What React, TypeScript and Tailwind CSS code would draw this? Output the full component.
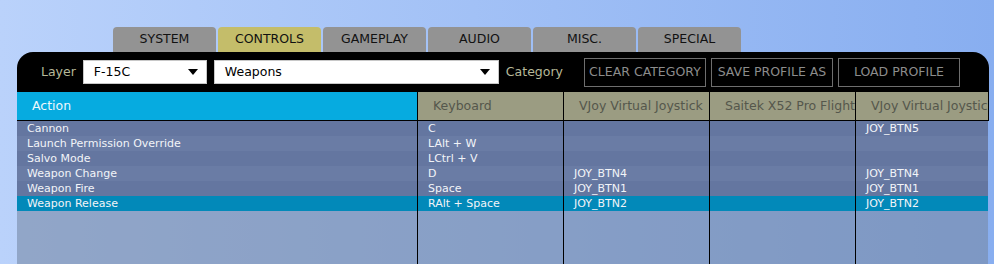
import { Fragment } from "react";

const tabs = ["SYSTEM", "CONTROLS", "GAMEPLAY", "AUDIO", "MISC.", "SPECIAL"];

const columns = [
  { label: "Action", w: "w-[401px]" },
  { label: "Keyboard", w: "w-[146px]" },
  { label: "VJoy Virtual Joystick", w: "w-[146px]" },
  { label: "Saitek X52 Pro Flight", w: "w-[146px]" },
  { label: "VJoy Virtual Joystick", w: "w-[132px]" },
];

const rows = [
  ["Cannon", "C", "", "", "JOY_BTN5"],
  ["Launch Permission Override", "LAlt + W", "", "", ""],
  ["Salvo Mode", "LCtrl + V", "", "", ""],
  ["Weapon Change", "D", "JOY_BTN4", "", "JOY_BTN4"],
  ["Weapon Fire", "Space", "JOY_BTN1", "", "JOY_BTN1"],
  ["Weapon Release", "RAlt + Space", "JOY_BTN2", "", "JOY_BTN2"],
];

function Select({ value, w }: { value: string; w: string }) {
  return (
    <div className={`${w} h-[24px] bg-white border border-[#c8c8c8] flex items-center justify-between pl-[10px] pr-[8px] text-black`}>
      <span className="pt-[1px]">{value}</span>
      <svg width="10" height="6" viewBox="0 0 10 6">
        <polygon points="0,0 10,0 5,6" fill="#000" />
      </svg>
    </div>
  );
}

function ToolButton({ label }: { label: string }) {
  return (
    <div className="w-[122px] h-[29px] border border-[#6e6e6e] flex items-center justify-center text-[#8c8c8c] whitespace-nowrap overflow-hidden">
      {label}
    </div>
  );
}

export default function App() {
  return (
    <div className="w-[994px] h-[264px] overflow-hidden flex flex-col bg-gradient-to-r from-[#bad2fb] to-[#88aef0] font-['DejaVu_Sans',sans-serif] text-[12.5px]">
      <div className="flex gap-[2px] pl-[113px] pt-[27px]">
        {tabs.map((t) => (
          <div
            key={t}
            className={`w-[103px] h-[25px] rounded-t-[4px] flex items-center justify-center text-[#111] ${
              t === "CONTROLS" ? "bg-[#c4bd6a]" : "bg-[#939393]"
            }`}
          >
            {t}
          </div>
        ))}
      </div>

      <div className="ml-[17px] w-[972px] flex-1 flex flex-col">
        <div className="h-[40px] flex items-center pl-[24px] shrink-0 bg-black rounded-t-[16px]">
          <span className="text-[#b6b898] mr-[7px]">Layer</span>
          <Select value="F-15C" w="w-[124px]" />
          <div className="w-[7px]" />
          <Select value="Weapons" w="w-[285px]" />
          <span className="text-[#b6b898] ml-[7px] mr-[21px]">Category</span>
          <div className="flex gap-[5px]">
            <ToolButton label="CLEAR CATEGORY" />
            <ToolButton label="SAVE PROFILE AS" />
            <ToolButton label="LOAD PROFILE" />
          </div>
        </div>

        <div className="flex h-[29px] border-b border-r border-black shrink-0">
          {columns.map((c, i) => (
            <div
              key={i}
              className={`${c.w} pl-[15px] flex items-center whitespace-nowrap overflow-hidden ${
                i < columns.length - 1 ? "border-r border-black" : ""
              } ${i === 0 ? "bg-[#06abe0] text-[#eef8fc]" : "bg-[#9b9c82] text-[#55574c]"}`}
            >
              {c.label}
            </div>
          ))}
        </div>

        <div className="flex-1 flex flex-col text-[11px] text-[#f2f4f8] w-[971px]">
          {rows.map((r, ri) => (
            <div
              key={ri}
              className={`flex h-[15px] leading-[15px] ${
                ri === rows.length - 1 ? "bg-[#0289b9]" : ri % 2 === 0 ? "bg-[#6476a0]" : "bg-[#6a7ca5]"
              }`}
            >
              {r.map((cell, ci) => (
                <Fragment key={ci}>
                  <div
                    className={`${columns[ci].w} pl-[10px] whitespace-nowrap overflow-hidden ${
                      ci < columns.length - 1 ? "border-r border-black" : ""
                    }`}
                  >
                    {cell}
                  </div>
                </Fragment>
              ))}
            </div>
          ))}
          <div className="flex flex-1 bg-[#7689a7]/60">
            {columns.map((c, i) => (
              <div key={i} className={`${c.w} ${i < columns.length - 1 ? "border-r border-black" : ""}`} />
            ))}
          </div>
        </div>
      </div>
    </div>
  );
}
